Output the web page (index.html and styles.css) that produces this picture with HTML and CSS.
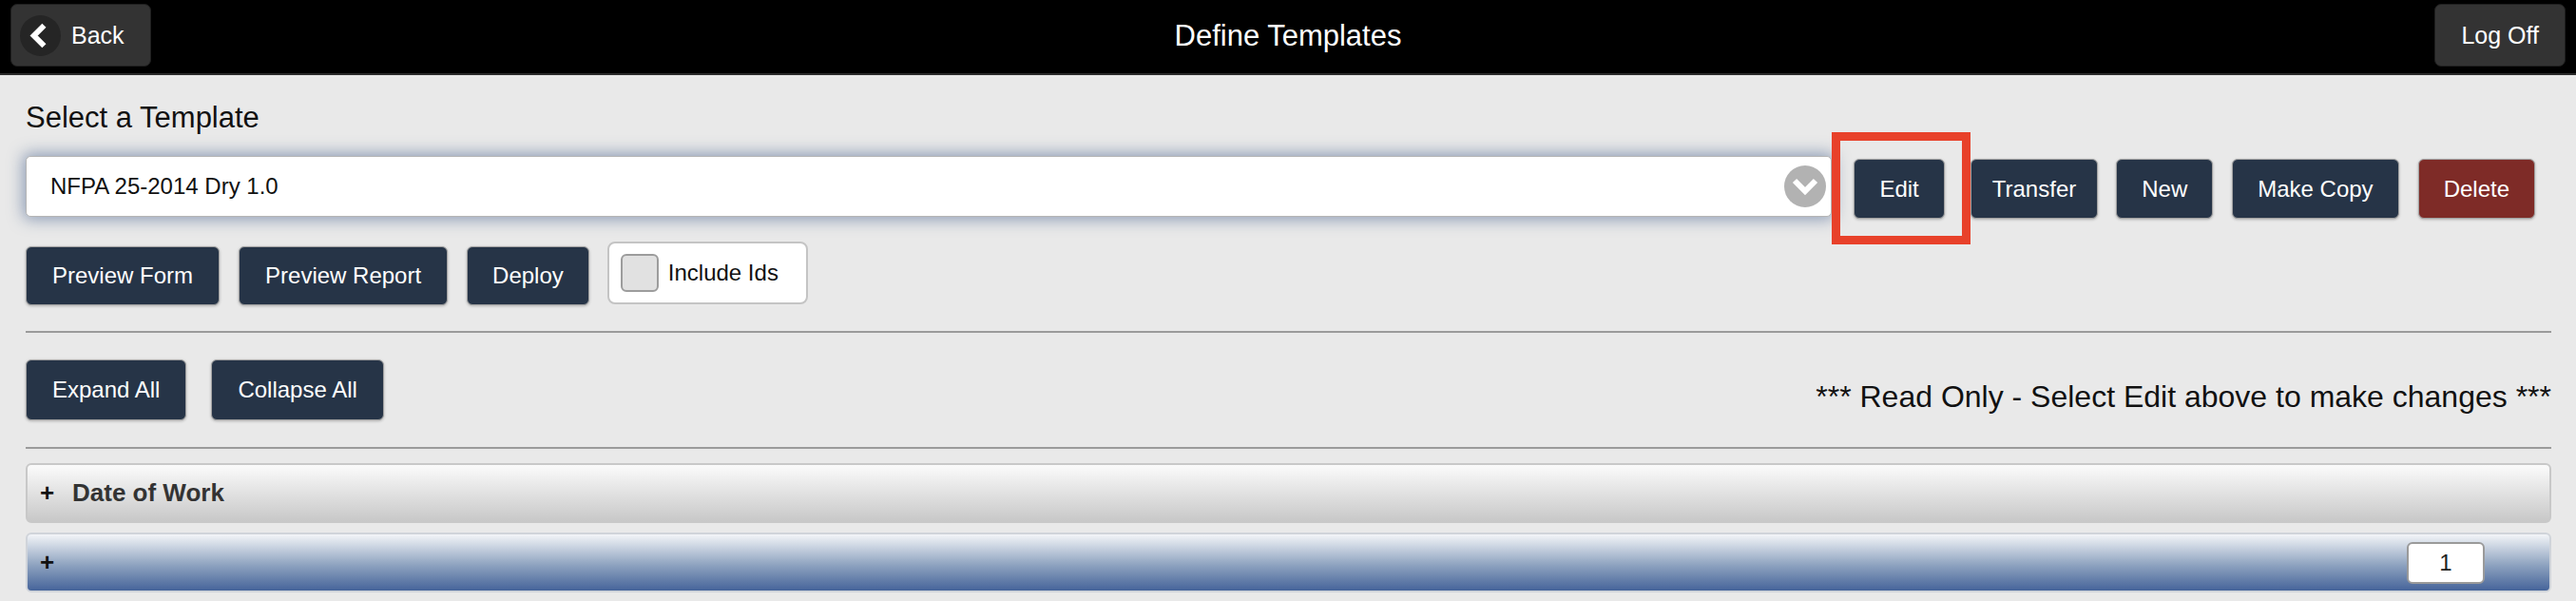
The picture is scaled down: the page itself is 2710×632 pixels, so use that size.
FILE: index.html
```html
<!DOCTYPE html>
<html lang="en">
<head>
<meta charset="utf-8">
<title>Define Templates</title>
<link rel="stylesheet" href="styles.css">
</head>
<body>
<header class="topbar">
  <div class="bar-left">
    <button class="hbtn back" type="button">
      <span class="back-ico">
        <svg width="43" height="43" viewBox="0 0 44 44"><circle cx="22" cy="22" r="22" fill="#252525"/><polyline points="26,11 15,22 26,33" fill="none" stroke="#fff" stroke-width="6" stroke-linejoin="miter"/></svg>
      </span>
      <span>Back</span>
    </button>
  </div>
  <h1 class="title">Define Templates</h1>
  <div class="bar-right">
    <button class="hbtn" type="button">Log Off</button>
  </div>
</header>

<main class="content">
  <div class="label">Select a Template</div>

  <div class="row row-select">
    <div class="select">
      <span class="select-text">NFPA 25-2014 Dry 1.0</span>
      <svg class="select-ico" width="44" height="44" viewBox="0 0 44 44"><circle cx="22" cy="22" r="22" fill="#b2b2b2"/><polyline points="11,16 22,27 33,16" fill="none" stroke="#fff" stroke-width="6"/></svg>
    </div>
    <div class="mark"><button class="btn" type="button">Edit</button></div>
    <button class="btn btn-narrow ml27" type="button">Transfer</button>
    <button class="btn ml19" type="button">New</button>
    <button class="btn ml20" type="button">Make Copy</button>
    <button class="btn btn-danger ml20" type="button">Delete</button>
  </div>

  <div class="row row-actions">
    <button class="btn btn-sm" type="button">Preview Form</button>
    <button class="btn btn-sm" type="button">Preview Report</button>
    <button class="btn btn-sm btn-deploy" type="button">Deploy</button>
    <label class="check">
      <span class="check-box"></span>
      <span>Include Ids</span>
    </label>
  </div>

  <hr class="sep sep-1">

  <div class="row row-expand">
    <button class="btn btn-lg" type="button">Expand All</button>
    <button class="btn btn-lg" type="button">Collapse All</button>
    <div class="readonly">*** Read Only - Select Edit above to make changes ***</div>
  </div>

  <hr class="sep sep-2">

  <div class="acc acc-gray">
    <span class="plus">+</span>
    <span class="acc-title">Date of Work</span>
  </div>
  <div class="acc acc-blue">
    <span class="plus">+</span>
    <span class="badge">1</span>
  </div>
</main>
</body>
</html>
```
FILE: styles.css
```css
* { box-sizing: border-box; }

html, body {
  margin: 0;
  padding: 0;
  background: #e9e9e9;
  font-family: "Liberation Sans", Arial, Helvetica, sans-serif;
  color: #111;
}

button {
  font-family: inherit;
  cursor: pointer;
}

/* ---------- top bar ---------- */
.topbar {
  height: 79px;
  background: #000;
  border-bottom: 2px solid #2b2b2b;
  display: grid;
  grid-template-columns: 1fr auto 1fr;
  align-items: start;
  padding: 4px 11px 0;
}

.bar-right { justify-self: end; }

.title {
  margin: 0;
  color: #fff;
  font-weight: normal;
  font-size: 31px;
  line-height: 68px;
}

.hbtn {
  height: 66px;
  padding: 0 27px;
  background: #333;
  border: 1px solid #1f1f1f;
  border-radius: 7px;
  color: #fff;
  font-size: 25px;
  display: flex;
  align-items: center;
}

.hbtn.back {
  padding-left: 9px;
  gap: 11px;
}

.back-ico { display: flex; }

/* ---------- content ---------- */
.content {
  padding: 0 26px 0 27px;
}

.label {
  margin-top: 28px;
  font-size: 31px;
  line-height: 34px;
  color: #111;
}

.row {
  display: flex;
  align-items: flex-start;
}

.row-select {
  margin-top: 23px;
  padding-right: 17px;
}

.select {
  flex: 1;
  height: 64px;
  background: #fff;
  border: 1px solid #b5b5b5;
  border-radius: 5px;
  box-shadow: 0 0 16px 3px rgba(55, 85, 135, 0.5);
  display: flex;
  align-items: center;
  justify-content: space-between;
  padding: 0 5px 0 25px;
}

.select-text {
  font-size: 24px;
  color: #111;
}

.btn {
  height: 63px;
  margin-top: 3px;
  padding: 0 26px;
  background: #263447;
  color: #fff;
  border: 1px solid #a2a2a2;
  border-radius: 6px;
  font-size: 24px;
  line-height: 1;
  box-shadow: 0 1px 3px rgba(0, 0, 0, 0.25);
}

.btn-narrow { padding: 0 22px; }

.btn-danger { background: #7e2b27; }

.mark {
  position: relative;
  margin-left: 23px;
}

.mark .btn { display: block; }

.mark::after {
  content: "";
  position: absolute;
  left: -23px;
  right: -27px;
  top: -25px;
  bottom: -27px;
  border: 9px solid #e8412a;
  pointer-events: none;
}

.ml27 { margin-left: 27px; }
.ml19 { margin-left: 19px; }
.ml20 { margin-left: 20px; }

.row-actions {
  margin-top: 24px;
  gap: 20px;
}

.btn-sm {
  height: 62px;
  margin-top: 5px;
  padding: 0 27px;
}

.btn-deploy { padding: 0 26px; }

.check {
  height: 66px;
  margin-left: -1px;
  background: #fff;
  border: 2px solid #c4c4c4;
  border-radius: 8px;
  display: flex;
  align-items: center;
  gap: 10px;
  padding: 0 29px 0 12px;
  font-size: 24px;
  color: #111;
}

.check-box {
  width: 40px;
  height: 40px;
  background: #e1e1e1;
  border: 2px solid #9c9c9c;
  border-radius: 6px;
}

.sep {
  margin: 0;
  height: 2px;
  border: 0;
  background: #9b9b9b;
}

.sep-1 { margin-top: 27px; }
.sep-2 { margin-top: 28px; }

.row-expand {
  margin-top: 28px;
  gap: 26px;
}

.btn-lg {
  height: 64px;
  margin-top: 0;
  padding: 0 27px;
}

.readonly {
  margin-left: auto;
  margin-top: 19px;
  font-size: 32px;
  line-height: 40px;
  color: #111;
}

/* ---------- accordion ---------- */
.acc {
  height: 63px;
  border: 2px solid #c8c8c8;
  border-radius: 6px;
  display: flex;
  align-items: center;
  padding-left: 13px;
  padding-right: 68px;
}

.acc-gray {
  margin-top: 15px;
  background: linear-gradient(#fbfbfb, #c8c8c8);
}

.acc-blue {
  margin-top: 10px;
  background: linear-gradient(#f3f5f8, #8da2bf 55%, #46649a);
  border-color: #d0d4da;
}

.plus {
  width: 34px;
  font-weight: bold;
  font-size: 26px;
  color: #111;
}

.acc-title {
  font-weight: bold;
  font-size: 26px;
  color: #333;
}

.badge {
  margin-left: auto;
  width: 82px;
  height: 44px;
  background: #fff;
  border: 2px solid #9a9a9a;
  border-radius: 6px;
  display: flex;
  align-items: center;
  justify-content: center;
  font-size: 24px;
  color: #222;
}
```
